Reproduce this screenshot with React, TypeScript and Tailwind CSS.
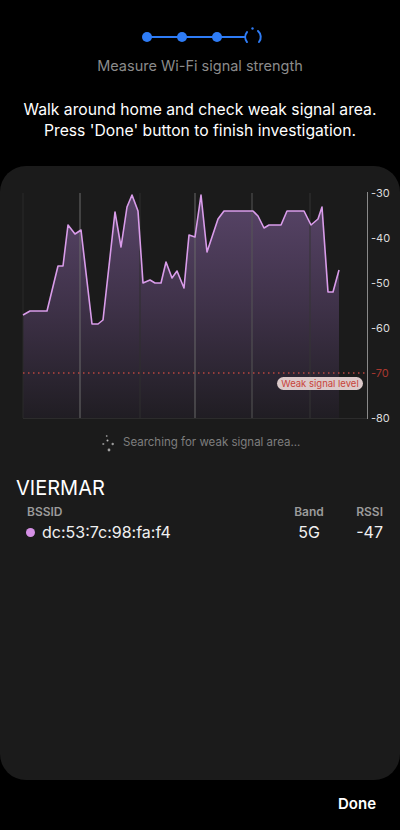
import React from 'react';

const pts: [number, number][] = [
  [23, 316], [30, 312], [47, 312], [58, 267], [63, 267], [68, 226], [75, 235], [81, 231],
  [92, 325], [98, 325], [103, 321], [115, 213], [121, 248], [127, 208], [132, 196], [138, 212],
  [143, 284], [150, 281], [155, 284], [161, 284], [166, 263], [172, 279], [177, 272], [184, 289],
  [189, 236], [195, 238], [201, 196], [207, 253], [218, 220], [224, 212], [253, 212], [258, 217],
  [264, 229], [269, 226], [281, 226], [287, 212], [304, 212], [311, 226], [318, 220], [322, 208],
  [328, 293], [333, 293], [339, 271],
];

const grid = [
  { x: 23, c: '#2b2b2b' },
  { x: 80, c: '#6c6c6c' },
  { x: 140, c: '#2f2f2f' },
  { x: 195, c: '#686868' },
  { x: 252, c: '#575757' },
  { x: 310, c: '#343434' },
];

const ticks = [
  { v: '-30', y: 194 },
  { v: '-40', y: 239 },
  { v: '-50', y: 284 },
  { v: '-60', y: 329 },
  { v: '-80', y: 419 },
];

function Stepper() {
  return (
    <svg width="400" height="20" viewBox="0 27 400 20" className="block">
      <line x1="147" y1="37" x2="245" y2="37" stroke="#2e7cf6" strokeWidth="2" />
      {[147, 182, 217].map((x) => (
        <circle key={x} cx={x} cy="37" r="5" fill="#2e7cf6" />
      ))}
      <path d="M247 32 A8 8 0 0 0 247 42" stroke="#2e7cf6" strokeWidth="2" fill="none" strokeLinecap="round" />
      <path d="M258 31 A8 8 0 0 1 259 42" stroke="#2e7cf6" strokeWidth="2" fill="none" strokeLinecap="round" />
      <circle cx="252.5" cy="28.5" r="1.2" fill="#2e7cf6" />
    </svg>
  );
}

function Chart() {
  const line = pts.map((p) => p.join(',')).join(' ');
  const area = `23,419 ${line} 339,419`;
  return (
    <svg width="400" height="255" viewBox="0 180 400 255" className="block">
      <defs>
        <linearGradient id="fill" x1="0" y1="194" x2="0" y2="419" gradientUnits="userSpaceOnUse">
          <stop offset="0" stopColor="#594569" />
          <stop offset="0.5" stopColor="#3f3249" />
          <stop offset="1" stopColor="#201d23" />
        </linearGradient>
      </defs>
      <polygon points={area} fill="url(#fill)" />
      {grid.map((g) => (
        <line key={g.x} x1={g.x} y1="194" x2={g.x} y2="419" stroke={g.c} strokeWidth="1" />
      ))}
      <line x1="23" y1="419.5" x2="367" y2="419.5" stroke="#2c2c2c" strokeWidth="1" />
      <polyline points={line} fill="none" stroke="#d99cea" strokeWidth="1.6" strokeLinejoin="round" />
      <line x1="23" y1="374" x2="366" y2="374" stroke="#b9473f" strokeWidth="1.5" strokeDasharray="1.5 3.5" />
      <line x1="367.5" y1="193" x2="367.5" y2="420" stroke="#8a8a8a" strokeWidth="1" />
      {ticks.map((t) => (
        <text key={t.v} x="371" y={t.y + 4} fontSize="11" fill="#dcdcdc" fontFamily="Inter, sans-serif">
          {t.v}
        </text>
      ))}
      <text x="371" y="378" fontSize="11" fill="#a8382f" fontFamily="Inter, sans-serif">-70</text>
      <rect x="277" y="378" width="86" height="13" rx="6.5" fill="#dccaca" />
      <text x="320" y="388" fontSize="9.5" fill="#c8443a" textAnchor="middle" fontFamily="Inter, sans-serif">
        Weak signal level
      </text>
    </svg>
  );
}

function Spinner() {
  return (
    <svg width="14" height="18" viewBox="101 433 14 18" className="block">
      <circle cx="106.7" cy="435" r="0.9" fill="#8a8a8a" />
      <circle cx="103.3" cy="443" r="1.1" fill="#8a8a8a" />
      <circle cx="112.7" cy="443" r="1.2" fill="#9a9a9a" />
      <circle cx="109" cy="449" r="1.4" fill="#a0a0a0" />
      <circle cx="107.5" cy="439.5" r="1" fill="#bdbdbd" />
    </svg>
  );
}

export default function App() {
  return (
    <div className="h-[830px] w-[400px] bg-black text-white flex flex-col overflow-hidden font-['Inter','Roboto',sans-serif]">
      {/* Header */}
      <div className="pt-[27px]">
        <Stepper />
        <p className="mt-[9px] text-center text-[14.5px] leading-[20px] text-[#8b8b8b]">Measure Wi-Fi signal strength</p>
        <p className="mt-[23px] text-center text-[15.7px] leading-[21px] text-white">
          Walk around home and check weak signal area.
          <br />
          Press 'Done' button to finish investigation.
        </p>
      </div>

      {/* Card */}
      <div className="mt-[25px] flex-1 rounded-[26px] bg-[#1b1b1b] pt-[13px]">
        <Chart />
        <div className="flex items-center h-[18px] pl-[101px] gap-[8px]">
          <Spinner />
          <span className="text-[11.5px] text-[#7e7e7e]">Searching for weak signal area...</span>
        </div>

        <h2 className="mt-[23px] pl-[16px] text-[20px] leading-[26px] text-white">VIERMAR</h2>

        <div className="mt-[3px] pl-[27px] pr-[17px] grid grid-cols-[1fr_56px_46px] text-[12px] leading-[16px] font-semibold text-[#9b9b9b]">
          <span>BSSID</span>
          <span className="text-center">Band</span>
          <span className="text-right">RSSI</span>
        </div>
        <div className="mt-[1px] pl-[26px] pr-[17px] grid grid-cols-[1fr_56px_46px] items-center text-[16px] leading-[22px] text-[#f0f0f0]">
          <span className="flex items-center gap-[7px]">
            <span className="w-[9px] h-[9px] rounded-full bg-[#d590e6]" />
            dc:53:7c:98:fa:f4
          </span>
          <span className="text-center">5G</span>
          <span className="text-right">-47</span>
        </div>
      </div>

      {/* Footer */}
      <div className="h-[50px] flex items-center justify-end pr-[24px] pb-[2px]">
        <span className="text-[15px] font-semibold text-white">Done</span>
      </div>
    </div>
  );
}
